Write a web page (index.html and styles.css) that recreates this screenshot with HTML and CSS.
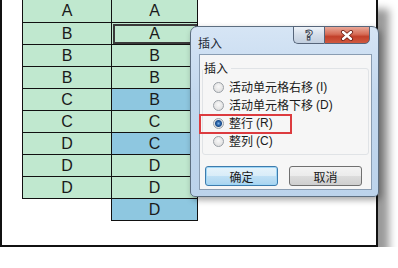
FILE: index.html
```html
<!DOCTYPE html>
<html lang="zh">
<head>
    <meta charset="UTF-8">
    <title>插入</title>
    <link rel="stylesheet" href="styles.css">
</head>
<body>

    <div class="shot">
        <div class="sheet">
            <div class="cell g">A</div><div class="cell g">A</div>
            <div class="cell g">B</div><div class="cell g sel">A</div>
            <div class="cell g">B</div><div class="cell g">B</div>
            <div class="cell g">B</div><div class="cell g">B</div>
            <div class="cell g">C</div><div class="cell b">B</div>
            <div class="cell g">C</div><div class="cell g">C</div>
            <div class="cell g">D</div><div class="cell b">C</div>
            <div class="cell g">D</div><div class="cell g">D</div>
            <div class="cell g">D</div><div class="cell g">D</div>
            <div class="cell empty"></div><div class="cell b">D</div>
        </div>

        <div class="dialog">
            <div class="titlebar">
                <span class="title">插入</span>
                <div class="caption-btns">
                    <span class="help">?</span>
                    <span class="close">
                        <svg width="14" height="11" viewBox="0 0 14 11">
                            <path d="M3 2 L11 9 M11 2 L3 9" stroke="#6b1a10" stroke-width="4" stroke-linecap="round"/>
                            <path d="M3 2 L11 9 M11 2 L3 9" stroke="#fff" stroke-width="2.4" stroke-linecap="round"/>
                        </svg>
                    </span>
                </div>
            </div>
            <div class="client">
                <fieldset class="group">
                    <legend>插入</legend>
                    <label class="opt"><span class="radio"></span>活动单元格右移<span class="key">(<u>I</u>)</span></label>
                    <label class="opt"><span class="radio"></span>活动单元格下移<span class="key">(<u>D</u>)</span></label>
                    <label class="opt"><span class="radio on"></span>整行<span class="key">(<u>R</u>)</span></label>
                    <label class="opt"><span class="radio"></span>整列<span class="key">(<u>C</u>)</span></label>
                </fieldset>
                <div class="buttons">
                    <span class="btn default">确定</span>
                    <span class="btn">取消</span>
                </div>
            </div>
            <div class="mark"></div>
        </div>
    </div>

</body>
</html>
```

FILE: styles.css
```css
body {
    margin: 0;
    background: #fff;
    font-family: "Liberation Sans", "Noto Sans CJK SC", sans-serif;
}

.shot {
    position: relative;
    box-sizing: border-box;
    width: 378px;
    height: 247px;
    border-left: 2px solid #111;
    border-right: 2px solid #111;
    border-bottom: 2px solid #111;
    background: #fff;
    box-shadow: 11px 9px 8px rgba(0, 0, 0, 0.4);
}

.sheet {
    display: grid;
    grid-template-columns: 89px 86px;
    grid-template-rows: 23px repeat(9, 22px);
    margin-left: 20px;
    width: 175px;
    border-left: 1px solid #111;
}

.cell {
    box-sizing: border-box;
    display: flex;
    align-items: center;
    justify-content: center;
    border-right: 1px solid #111;
    border-bottom: 1px solid #111;
    font-size: 16px;
    color: #1a1a1a;
}

.cell.g {
    background: #c0e8cf;
}

.cell.b {
    background: #8ec7e0;
}

.cell.sel {
    outline: 2px solid #3a3a3a;
    outline-offset: -3px;
}

.cell.empty {
    border-bottom: none;
    background: #fff;
    margin-left: -1px;
    box-shadow: -1px 0 0 #fff;
}

/* dialog */

.dialog {
    position: absolute;
    left: 188px;
    top: 26px;
    box-sizing: border-box;
    width: 189px;
    height: 171px;
    display: flex;
    flex-direction: column;
    border: 1px solid #5d6e80;
    border-radius: 7px 7px 5px 5px;
    background: linear-gradient(#d6e5f5, #c3d8ee 40%, #bcd3eb);
    box-shadow: 2px 3px 6px rgba(0, 0, 0, 0.35);
}

.titlebar {
    position: relative;
    height: 27px;
}

.title {
    position: absolute;
    left: 7px;
    top: 7px;
    font-size: 12px;
    color: #1e2a36;
}

.caption-btns {
    position: absolute;
    right: 8px;
    top: -1px;
    display: flex;
}

.help,
.close {
    box-sizing: border-box;
    height: 18px;
    display: flex;
    align-items: center;
    justify-content: center;
    border: 1px solid #56657a;
}

.help {
    width: 31px;
    border-right: none;
    border-radius: 0 0 0 5px;
    background: linear-gradient(#eef3f9, #d3dde9 50%, #c2cfdf);
    font: bold 14px "DejaVu Sans", sans-serif;
    color: #f4f6f9;
    -webkit-text-stroke: 1px #3f4a57;
}

.close {
    width: 46px;
    border-radius: 0 0 5px 0;
    background: linear-gradient(#e9a797, #d66c56 45%, #c2402a 60%, #d0593f);
}

.client {
    flex: 1;
    margin: 0 6px 6px 8px;
    display: flex;
    flex-direction: column;
    border: 1px solid #8a9db2;
    background: #f6f6f6;
    font-size: 12px;
    color: #1a1a1a;
    font-family: "Noto Sans CJK SC", sans-serif;
}

.group {
    margin: 6px 2px 0 2px;
    padding: 3px 0 4px 0;
    border: 1px solid #e0e3e6;
    border-radius: 3px;
}

.group legend {
    padding: 0 3px 0 1px;
    line-height: 14px;
}

.opt {
    display: flex;
    align-items: center;
    height: 18px;
    margin-left: 10px;
    line-height: 14px;
    white-space: nowrap;
}

.radio {
    box-sizing: border-box;
    width: 11px;
    height: 11px;
    margin-right: 5px;
    border-radius: 50%;
    border: 1px solid #9aa0a6;
    background: radial-gradient(circle at 50% 40%, #f8f8f8, #d8d8d8);
}

.radio.on {
    background: radial-gradient(circle, #7fb2e6 0, #2a63a8 2px, #1b4d8c 3px, #e8e8e8 4px, #d6d6d6);
}

.key {
    margin-left: 3px;
    font-family: "Liberation Sans", sans-serif;
    font-size: 12px;
}

.key u {
    text-decoration: none;
}

.buttons {
    display: flex;
    gap: 11px;
    margin-top: 11px;
    padding-left: 5px;
}

.btn {
    box-sizing: border-box;
    width: 73px;
    height: 20px;
    display: flex;
    align-items: center;
    justify-content: center;
    border: 1px solid #707070;
    border-radius: 3px;
    background: linear-gradient(#f3f3f3, #ebebeb 50%, #dcdcdc 51%, #cfcfcf);
    font-size: 12px;
}

.btn.default {
    border-color: #3d7bad;
    box-shadow: inset 0 0 0 1px #9fd6f5;
    background: linear-gradient(#e6f3fb, #d8ecf8 50%, #bfe0f5 51%, #a9d4f0);
}

.mark {
    position: absolute;
    left: 8px;
    top: 87px;
    width: 93px;
    height: 20px;
    box-sizing: border-box;
    border: 2px solid #dc3b3f;
}
```
